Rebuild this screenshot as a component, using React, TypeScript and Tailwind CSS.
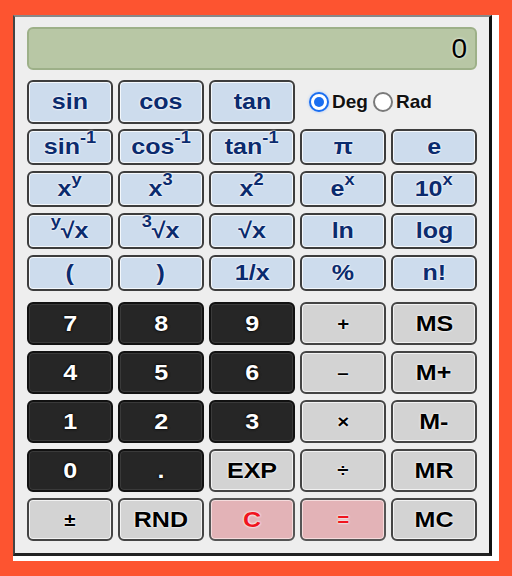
import type { ReactNode } from 'react'

type Kind = 'fn' | 'num' | 'op' | 'red'

const kindCls: Record<Kind, string> = {
  fn: 'bg-[#cddced] border-[#3d3d3d] text-[#0b2b6e] shadow-[inset_0_0_0_1px_#f4f8fc] [text-shadow:0_0_2px_#fff,0_0_2px_#fff]',
  num: 'bg-[#262626] border-[#111] text-white shadow-[inset_0_0_0_1px_#3a3a3a] [text-shadow:0_0_2px_#000,0_0_2px_#000]',
  op: 'bg-[#d3d3d3] border-[#444] text-black shadow-[inset_0_0_0_1px_#f2f2f2] [text-shadow:0_0_2px_#fff,0_0_2px_#fff]',
  red: 'bg-[#e3b3b7] border-[#555] text-[#f0141e] shadow-[inset_0_0_0_1px_#f5dcdd] [text-shadow:0_0_2px_#fff,0_0_2px_#fff]',
}

function Key({ kind, children, small }: { kind: Kind; children: ReactNode; small?: boolean }) {
  return (
    <button
      className={`flex items-center justify-center rounded-[6px] border-2 font-bold leading-none ${
        small ? 'text-[18px]' : 'text-[22px]'
      } ${kindCls[kind]}`}
    >
      <span className="inline-block scale-x-[1.14]">{children}</span>
    </button>
  )
}

const Sup = ({ children }: { children: ReactNode }) => (
  <sup className="relative -top-[3px] align-super text-[16px]">{children}</sup>
)

function Radio({ checked, label }: { checked?: boolean; label: string }) {
  return (
    <label className="flex items-center gap-[3px]">
      {checked ? (
        <span className="flex h-[20px] w-[20px] items-center justify-center rounded-full border-2 border-[#1a6ef0] bg-white shadow-[0_0_3px_#9ec3ff]">
          <span className="h-[10px] w-[10px] rounded-full bg-[#1a6ef0]" />
        </span>
      ) : (
        <span className="h-[20px] w-[20px] rounded-full border-2 border-[#7a7a7a] bg-white" />
      )}
      <span className="text-[19px] font-bold text-[#111] [text-shadow:0_0_2px_#fff]">{label}</span>
    </label>
  )
}

export default function App() {
  return (
    <div
      className="h-[576px] w-[512px] bg-[#fd5430] pl-[13px] pt-[15px]"
      style={{ fontFamily: '"Liberation Sans", Arial, sans-serif' }}
    >
      <div className="h-[546px] w-[486px] bg-white">
        <div className="w-[479px] border-b-[3px] border-l-2 border-r-[3px] border-t-2 border-b-[#222] border-l-[#444] border-r-[#111] border-t-[#888] bg-[#eeeeee] px-[12px] pb-[12px] pt-[10px]">
          <div className="flex h-[43px] items-center justify-end rounded-[6px] border-2 border-[#9db088] bg-[#b8c7a5] pr-[8px] text-[28px] font-medium text-black [text-shadow:0_0_3px_#fff]">
            0
          </div>

          <div className="mt-[10px] grid h-[44px] grid-cols-5 gap-[5px]">
            <Key kind="fn">sin</Key>
            <Key kind="fn">cos</Key>
            <Key kind="fn">tan</Key>
            <div className="col-span-2 flex items-center gap-[5px] pl-[9px]">
              <Radio checked label="Deg" />
              <Radio label="Rad" />
            </div>
          </div>

          <div className="mt-[5px] grid grid-cols-5 grid-rows-[repeat(4,36px)] gap-x-[5px] gap-y-[6px]">
            <Key kind="fn">
              sin<Sup>-1</Sup>
            </Key>
            <Key kind="fn">
              cos<Sup>-1</Sup>
            </Key>
            <Key kind="fn">
              tan<Sup>-1</Sup>
            </Key>
            <Key kind="fn">π</Key>
            <Key kind="fn">e</Key>

            <Key kind="fn">
              x<Sup>y</Sup>
            </Key>
            <Key kind="fn">
              x<Sup>3</Sup>
            </Key>
            <Key kind="fn">
              x<Sup>2</Sup>
            </Key>
            <Key kind="fn">
              e<Sup>x</Sup>
            </Key>
            <Key kind="fn">
              10<Sup>x</Sup>
            </Key>

            <Key kind="fn">
              <Sup>y</Sup>√x
            </Key>
            <Key kind="fn">
              <Sup>3</Sup>√x
            </Key>
            <Key kind="fn">√x</Key>
            <Key kind="fn">ln</Key>
            <Key kind="fn">log</Key>

            <Key kind="fn">(</Key>
            <Key kind="fn">)</Key>
            <Key kind="fn">1/x</Key>
            <Key kind="fn">%</Key>
            <Key kind="fn">n!</Key>
          </div>

          <div className="mt-[11px] grid grid-cols-5 grid-rows-[repeat(5,43px)] gap-x-[5px] gap-y-[6px]">
            <Key kind="num">7</Key>
            <Key kind="num">8</Key>
            <Key kind="num">9</Key>
            <Key kind="op" small>
              +
            </Key>
            <Key kind="op">MS</Key>

            <Key kind="num">4</Key>
            <Key kind="num">5</Key>
            <Key kind="num">6</Key>
            <Key kind="op" small>
              –
            </Key>
            <Key kind="op">M+</Key>

            <Key kind="num">1</Key>
            <Key kind="num">2</Key>
            <Key kind="num">3</Key>
            <Key kind="op" small>
              ×
            </Key>
            <Key kind="op">M-</Key>

            <Key kind="num">0</Key>
            <Key kind="num">.</Key>
            <Key kind="op">EXP</Key>
            <Key kind="op" small>
              ÷
            </Key>
            <Key kind="op">MR</Key>

            <Key kind="op" small>
              ±
            </Key>
            <Key kind="op">RND</Key>
            <Key kind="red">C</Key>
            <Key kind="red" small>
              =
            </Key>
            <Key kind="op">MC</Key>
          </div>
        </div>
      </div>
    </div>
  )
}
